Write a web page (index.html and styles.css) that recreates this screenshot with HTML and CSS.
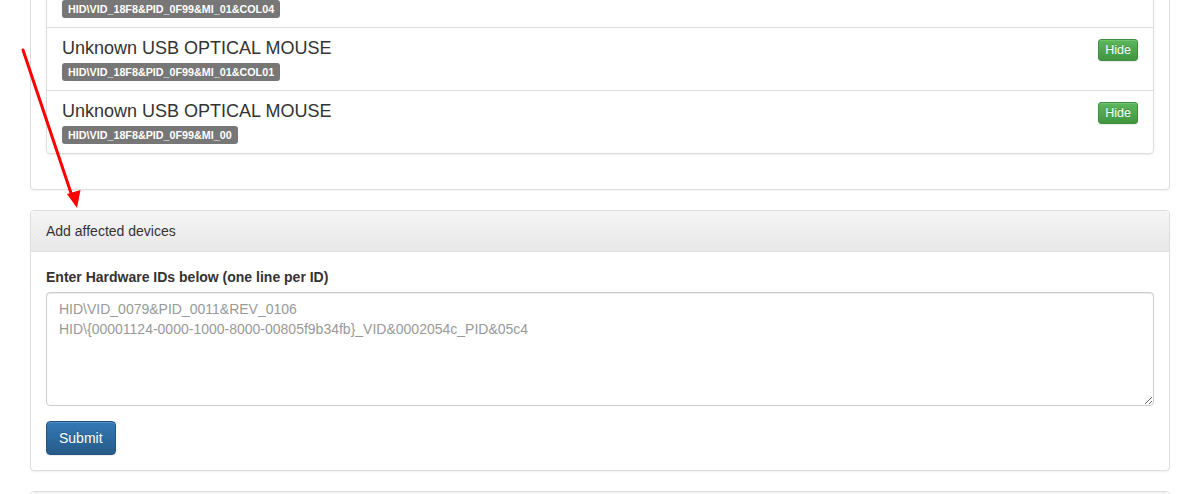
FILE: index.html
```html
<!DOCTYPE html>
<html>
<head>
<meta charset="utf-8">
<link rel="stylesheet" href="styles.css">
</head>
<body>
<div class="page">
  <div class="panel">
    <div class="panel-body">
      <ul class="list-group">
        <li class="list-item">
          <div class="item-main">
            <h4 class="item-title">Unknown USB OPTICAL MOUSE</h4>
            <span class="label">HID\VID_18F8&amp;PID_0F99&amp;MI_01&amp;COL04</span>
          </div>
          <button class="btn-hide">Hide</button>
        </li>
        <li class="list-item">
          <div class="item-main">
            <h4 class="item-title">Unknown USB OPTICAL MOUSE</h4>
            <span class="label">HID\VID_18F8&amp;PID_0F99&amp;MI_01&amp;COL01</span>
          </div>
          <button class="btn-hide">Hide</button>
        </li>
        <li class="list-item">
          <div class="item-main">
            <h4 class="item-title">Unknown USB OPTICAL MOUSE</h4>
            <span class="label">HID\VID_18F8&amp;PID_0F99&amp;MI_00</span>
          </div>
          <button class="btn-hide">Hide</button>
        </li>
      </ul>
    </div>
  </div>

  <div class="panel">
    <div class="panel-heading">Add affected devices</div>
    <div class="panel-body">
      <form class="form">
        <label class="form-label" for="ids">Enter Hardware IDs below (one line per ID)</label>
        <textarea id="ids" class="form-control" rows="5" placeholder="HID\VID_0079&amp;PID_0011&amp;REV_0106&#10;HID\{00001124-0000-1000-8000-00805f9b34fb}_VID&amp;0002054c_PID&amp;05c4"></textarea>
        <button type="button" class="btn-primary">Submit</button>
      </form>
    </div>
  </div>

  <div class="panel">
    <div class="panel-heading panel-heading-empty"></div>
    <div class="panel-body"></div>
  </div>

  <svg class="arrow" width="100" height="220" viewBox="0 0 100 220">
    <line x1="23" y1="50" x2="72" y2="196" stroke="#ff0000" stroke-width="3" stroke-linecap="round"/>
    <polygon points="77,208 67,194 80.5,190" fill="#ff0000"/>
  </svg>
</div>
</body>
</html>
```

FILE: styles.css
```css
* { box-sizing: border-box; }

html, body {
  margin: 0;
  padding: 0;
  background: #fff;
  overflow: hidden;
}

body {
  font-family: "Liberation Sans", Arial, Helvetica, sans-serif;
  font-size: 14px;
  line-height: 20px;
  color: #333;
}

.page {
  position: relative;
  width: 1140px;
  margin: -52px 0 0 30px;
}

.panel {
  background: #fff;
  border: 1px solid #ddd;
  border-radius: 4px;
  box-shadow: 0 1px 2px rgba(0, 0, 0, 0.05);
  margin-bottom: 20px;
}

.panel-heading {
  padding: 10px 15px;
  border-bottom: 1px solid #ddd;
  border-radius: 3px 3px 0 0;
  background: linear-gradient(to bottom, #f5f5f5 0, #e8e8e8 100%);
  color: #333;
  font-size: 14px;
  line-height: 20px;
}

.panel-heading-empty {
  height: 41px;
}

.panel-body {
  padding: 15px;
}

.list-group {
  list-style: none;
  margin: 0 0 20px 0;
  padding: 0;
  border-radius: 4px;
  box-shadow: 0 1px 2px rgba(0, 0, 0, 0.075);
}

.list-item {
  display: flex;
  justify-content: space-between;
  align-items: flex-start;
  padding: 10px 15px 9px;
  border: 1px solid #ddd;
  margin-bottom: -1px;
  background: #fff;
}

.list-item:first-child { border-radius: 4px 4px 0 0; }
.list-item:last-child { border-radius: 0 0 4px 4px; margin-bottom: 0; }

.item-main {
  display: flex;
  flex-direction: column;
  align-items: flex-start;
}

.item-title {
  margin: 0 0 5px;
  font-size: 18px;
  font-weight: normal;
  line-height: 20px;
  color: #333;
}

.label {
  display: inline-block;
  background: #777;
  color: #fff;
  font-size: 10.75px;
  font-weight: bold;
  line-height: 12px;
  padding: 3px 6px 3px;
  border-radius: 3px;
  white-space: nowrap;
}

.btn-hide {
  margin-top: 1px;
  font-family: "Liberation Sans", Arial, sans-serif;
  font-size: 12.5px;
  line-height: 18px;
  height: 22px;
  padding: 1px 6px;
  color: #fff;
  text-shadow: 0 -1px 0 rgba(0, 0, 0, 0.2);
  background: linear-gradient(to bottom, #5cb85c 0, #419641 100%);
  border: 1px solid #3e8f3e;
  border-radius: 3px;
  box-shadow: inset 0 1px 0 rgba(255, 255, 255, 0.15), 0 1px 1px rgba(0, 0, 0, 0.075);
}

.form {
  display: flex;
  flex-direction: column;
  align-items: flex-start;
}

.form-label {
  font-weight: bold;
  margin-bottom: 5px;
}

.form-control {
  display: block;
  width: 100%;
  height: 114px;
  padding: 6px 12px;
  font-family: "Liberation Sans", Arial, sans-serif;
  font-size: 14px;
  line-height: 20px;
  color: #555;
  border: 1px solid #ccc;
  border-radius: 4px;
  box-shadow: inset 0 1px 1px rgba(0, 0, 0, 0.075);
  margin-bottom: 15px;
  resize: vertical;
}

.form-control::placeholder { color: #999; }

.btn-primary {
  font-family: "Liberation Sans", Arial, sans-serif;
  font-size: 14px;
  line-height: 20px;
  height: 34px;
  padding: 6px 12px;
  color: #fff;
  text-shadow: 0 -1px 0 rgba(0, 0, 0, 0.2);
  background: linear-gradient(to bottom, #337ab7 0, #265a88 100%);
  border: 1px solid #245580;
  border-radius: 4px;
  box-shadow: inset 0 1px 0 rgba(255, 255, 255, 0.15), 0 1px 1px rgba(0, 0, 0, 0.075);
}

.arrow {
  position: absolute;
  left: -30px;
  top: 52px;
}
```
